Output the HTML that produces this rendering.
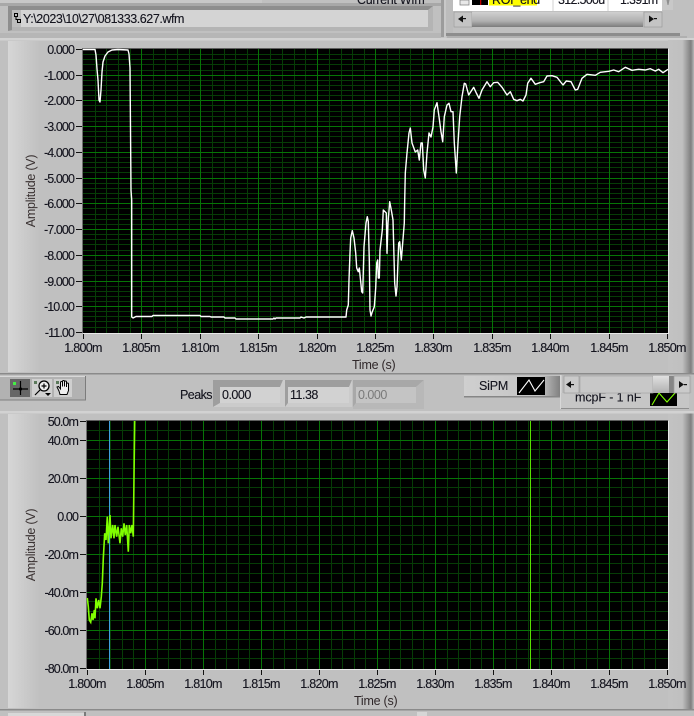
<!DOCTYPE html>
<html><head><meta charset="utf-8"><style>
html,body{margin:0;padding:0;background:#c0c0c0;width:694px;height:716px;overflow:hidden}
svg{display:block}
text{font-family:"Liberation Sans",sans-serif;font-size:12.5px;fill:#14141e;stroke:#14141e;stroke-width:.12px;letter-spacing:-.7px}
.r text{text-anchor:end;letter-spacing:-.9px}
.m text{text-anchor:middle}
</style></head><body>
<svg width="694" height="716" viewBox="0 0 694 716" xmlns="http://www.w3.org/2000/svg">
<defs>
<linearGradient id="lp" x1="0" x2="1" y1="0" y2="0"><stop offset="0" stop-color="#d6d6d6"/><stop offset="1" stop-color="#c0c0c0"/></linearGradient>
<linearGradient id="rb" x1="0" x2="1" y1="0" y2="0"><stop offset="0" stop-color="#c2c2c2"/><stop offset=".55" stop-color="#c0c0c0"/><stop offset=".88" stop-color="#7f7f7f"/><stop offset="1" stop-color="#b8b8b8"/></linearGradient>
<linearGradient id="sb" x1="0" x2="0" y1="0" y2="1"><stop offset="0" stop-color="#d0d0d0"/><stop offset=".6" stop-color="#b0b0b0"/><stop offset="1" stop-color="#7c7c7c"/></linearGradient>
<linearGradient id="bt" x1="0" x2="0" y1="0" y2="1"><stop offset="0" stop-color="#e0e0e0"/><stop offset="1" stop-color="#b0b0b0"/></linearGradient>
<linearGradient id="sip" x1="0" x2="1" y1="0" y2="0"><stop offset="0" stop-color="#cfcfcf"/><stop offset=".8" stop-color="#c4c4c4"/><stop offset="1" stop-color="#808080"/></linearGradient>
</defs>
<rect width="694" height="716" fill="#c0c0c0"/>

<!-- top strip -->
<rect x="0" y="0" width="262" height="3" fill="#c8c8c8"/>
<rect x="0" y="3" width="441" height="3" fill="#a8a8a8"/>
<rect x="8" y="6" width="425" height="25" fill="#b4b4b4"/>
<path d="M8 6H433L428 10H12V30L8 31Z" fill="#8e8e8e"/>
<rect x="12" y="10" width="416" height="17" fill="#d4d4d4"/>
<rect x="12" y="10" width="9" height="17" fill="#bdbdbd"/>
<path d="M14.5 13.5h3v3h-3zM17.5 19.5h3v3h-3zM16 16.5V19.5h3" fill="none" stroke="#000" stroke-width="1"/>
<text x="23" y="23" style="font-size:12.5px;letter-spacing:-.43px">Y:\2023\10\27\081333.627.wfm</text>
<text x="357" y="4" style="letter-spacing:-.3px">Current Wfm</text>
<rect x="0" y="33" width="441" height="5" fill="#b6b6b6"/>
<rect x="441" y="0" width="3" height="37" fill="#9c9c9c"/>
<rect x="444" y="0" width="2" height="38" fill="#c8c8c8"/>
<rect x="446" y="0" width="7" height="34" fill="#bcbcbc"/>
<rect x="446" y="33" width="234" height="3" fill="#8d8d8d"/>
<rect x="447" y="36" width="240" height="2" fill="#b0b0b0"/>
<!-- table -->
<rect x="453" y="0" width="209" height="11" fill="#fff"/>
<rect x="460" y="0" width="9" height="5" fill="#e8e8e8" stroke="#777" stroke-width=".7"/>
<rect x="472" y="0" width="16" height="5" fill="#000"/>
<rect x="480" y="0" width="1.3" height="5" fill="#c00000"/>
<rect x="489" y="0" width="48" height="5.5" fill="#ffff00"/>
<text x="492" y="4" style="letter-spacing:-.3px">ROI_end</text>
<text x="558" y="4">312.500u</text>
<text x="620" y="4">1.391m</text>
<rect x="552.5" y="0" width="1" height="11" fill="#d0d0d0"/>
<rect x="607.5" y="0" width="1" height="11" fill="#d0d0d0"/>
<rect x="662" y="0" width="11" height="10" fill="#c8c8c8"/>
<path d="M666.5 0h3l-1 5h-1z" fill="#909090"/>
<rect x="454" y="12" width="18" height="15" fill="#c4c4c4" stroke="#9c9c9c" stroke-width=".7"/>
<path d="M463 15.5v7l-5-3.5z" fill="#111"/><rect x="463" y="18" width="3" height="1.2" fill="#111"/>
<rect x="472" y="12" width="171" height="15" fill="url(#sb)"/>
<rect x="644" y="12" width="18" height="15" fill="#c4c4c4" stroke="#9c9c9c" stroke-width=".7"/>
<path d="M649 15.5v7l5 -3.5z" fill="#111"/><rect x="654" y="18" width="3" height="1.2" fill="#111"/>

<rect x="0" y="38" width="694" height="2.5" fill="#d2d2d2"/>
<rect x="8" y="41" width="32" height="331" fill="url(#lp)"/>
<rect x="0" y="41" width="8" height="331" fill="#c0c0c0"/>
<rect x="8" y="414" width="32" height="294" fill="url(#lp)"/>
<rect x="668" y="40" width="26" height="333" fill="url(#rb)"/>
<rect x="668" y="413" width="26" height="296" fill="url(#rb)"/>

<!-- TOP PLOT -->
<rect x="83" y="49" width="585" height="284" fill="#000"/>
<rect x="83" y="48" width="585" height="1" fill="#5e5e5e"/>
<rect x="82" y="48" width="1" height="285" fill="#6e6e6e"/>
<g shape-rendering="crispEdges" fill="none" stroke-width="1">
<path stroke="#063c06" d="M95.5 49V333M106.5 49V333M118.5 49V333M130.5 49V333M153.5 49V333M165.5 49V333M177.5 49V333M189.5 49V333M212.5 49V333M224.5 49V333M235.5 49V333M247.5 49V333M270.5 49V333M282.5 49V333M294.5 49V333M305.5 49V333M329.5 49V333M341.5 49V333M352.5 49V333M364.5 49V333M387.5 49V333M399.5 49V333M410.5 49V333M422.5 49V333M445.5 49V333M457.5 49V333M469.5 49V333M480.5 49V333M504.5 49V333M515.5 49V333M527.5 49V333M539.5 49V333M562.5 49V333M574.5 49V333M585.5 49V333M597.5 49V333M621.5 49V333M632.5 49V333M644.5 49V333M656.5 49V333
M83 54.5H668M83 59.5H668M83 64.5H668M83 70.5H668M83 80.5H668M83 85.5H668M83 90.5H668M83 95.5H668M83 105.5H668M83 111.5H668M83 116.5H668M83 121.5H668M83 131.5H668M83 136.5H668M83 142.5H668M83 147.5H668M83 157.5H668M83 162.5H668M83 167.5H668M83 172.5H668M83 183.5H668M83 188.5H668M83 193.5H668M83 198.5H668M83 208.5H668M83 214.5H668M83 219.5H668M83 224.5H668M83 234.5H668M83 239.5H668M83 244.5H668M83 250.5H668M83 260.5H668M83 265.5H668M83 270.5H668M83 275.5H668M83 286.5H668M83 291.5H668M83 296.5H668M83 301.5H668M83 311.5H668M83 316.5H668M83 321.5H668M83 327.5H668"/>
<path stroke="#067406" d="M141.5 49V333M200.5 49V333M258.5 49V333M317.5 49V333M375.5 49V333M433.5 49V333M492.5 49V333M550.5 49V333M609.5 49V333
M83 75.5H668M83 100.5H668M83 126.5H668M83 152.5H668M83 178.5H668M83 203.5H668M83 229.5H668M83 255.5H668M83 281.5H668M83 306.5H668"/>
</g>
<polyline fill="none" stroke="#fff" stroke-width="1.4" stroke-linejoin="round" points="83,49.5 95,49.5 96,55 97,69 98,80 99,100 100,102 101,90 102,72 103,62 105,56 108,52 112,50 118,49.5 128,50 129,54 130,68 131,190 131.7,200 131.7,317 133,318 136,316.5 152,316.5 153,315.5 200,315.5 201,316.5 210,316.5 211,317 224,317 225,318 235,318 236,319 273,319 274,318 275,319 276,318 300,318 301,317 304,318 306,317 346,317 346.7,310 348.3,305 349,280 350,253 350.7,238 352.3,230.7 354,238 355.7,253 356.7,268 358.3,271.7 359.3,268 360.7,281.7 361.7,291.7 362.7,293 364,246.7 366,223 367.3,216.7 368.3,221.7 369.3,260 370,310 371,316 372.3,311.7 374.3,306.7 375.7,288 376.7,263 377.7,260 378.3,278 379.3,278 380,250 382.3,230 383.3,210 386.3,213 387,253.3 388,223 389.7,201.7 391.3,210 393,220 394.7,283 396,296 397,287 398.7,243 399.7,241.7 401.3,260 402.7,243 404.3,223 404.7,200 405.3,173 407,153 409,133 410.3,128 412,143 415.3,152 417.7,150 419.3,160 421,143 422.3,143 423.7,170 425.3,178 427,153 429,133 431,137 433,127 434.3,110 437,102.7 439,116.7 441,131.7 442.7,141.7 444.3,116.7 447,105 449,103.3 451,111.7 453,111.7 454.3,143 456.3,173 458,143 459.7,116.7 462,96.7 464.3,83.3 465.7,84 468.7,95 473.7,87.3 476.3,93 479,98.3 482,90 487,81.7 490.3,86.7 493.7,82.7 497.7,82.3 502,87.3 507,95 510.3,91.7 513.7,99.3 517,100.7 520.3,99.3 523,101 526,95 527.7,83.3 531,78.3 535.3,84.3 539.7,82.7 543.7,81.7 547,76 552,75.7 557,77.3 563,85 566.3,81 571,81.7 575.3,90 577.7,89.3 582,78.3 587,74.3 595.3,75.3 600.3,72.3 608.7,71.3 613.7,70 618.7,71.7 625.3,67.3 632,70.3 638.7,69.3 645.3,70 650.3,68.7 655.3,71 658.7,69.3 663,72.7 668,69.3"/>
<rect x="83" y="333" width="585" height="1" fill="#e8e8e8"/>
<rect x="668" y="49" width="1" height="285" fill="#e8e8e8"/>
<g shape-rendering="crispEdges" fill="none" stroke="#111" stroke-width="1">
<path d="M76 49.5h6M76 75.5h6M76 100.5h6M76 126.5h6M76 152.5h6M76 178.5h6M76 203.5h6M76 229.5h6M76 255.5h6M76 281.5h6M76 306.5h6M76 332.5h6"/>
<path d="M83.5 334v5M141.5 334v5M200.5 334v5M258.5 334v5M317.5 334v5M375.5 334v5M433.5 334v5M492.5 334v5M550.5 334v5M609.5 334v5M667.5 334v5"/>
</g>
<g class="r">
<text x="74" y="54">0.000</text>
<text x="74" y="80">-1.000</text>
<text x="74" y="105">-2.000</text>
<text x="74" y="131">-3.000</text>
<text x="74" y="157">-4.000</text>
<text x="74" y="183">-5.000</text>
<text x="74" y="208">-6.000</text>
<text x="74" y="234">-7.000</text>
<text x="74" y="260">-8.000</text>
<text x="74" y="286">-9.000</text>
<text x="74" y="311">-10.00</text>
<text x="74" y="337">-11.00</text>
</g>
<g class="m">
<text x="83" y="352">1.800m</text><text x="141" y="352">1.805m</text><text x="200" y="352">1.810m</text><text x="258" y="352">1.815m</text><text x="317" y="352">1.820m</text><text x="375" y="352">1.825m</text><text x="433" y="352">1.830m</text><text x="492" y="352">1.835m</text><text x="550" y="352">1.840m</text><text x="609" y="352">1.845m</text><text x="667" y="352">1.850m</text>
</g>
<text x="352" y="369" style="fill:#30282a;stroke:none;letter-spacing:-.25px">Time (s)</text>
<text transform="translate(35,191) rotate(-90)" style="fill:#3a3232;stroke:none;letter-spacing:-.25px;text-anchor:middle">Amplitude (V)</text>

<!-- MIDDLE -->
<rect x="0" y="373" width="694" height="1.5" fill="#8a8a8a"/>
<path d="M0 377H85V400H0Z" fill="#b2b2b2"/>
<rect x="0" y="376" width="85" height="1" fill="#d8d8d8"/>
<rect x="85" y="376" width="1" height="24" fill="#7c7c7c"/>
<rect x="0" y="399.5" width="86" height="1" fill="#808080"/>
<rect x="10" y="379" width="20" height="18" fill="#666"/>
<rect x="32" y="379" width="20" height="18" fill="#d0d0d0"/>
<rect x="54" y="379" width="18" height="18" fill="#cfcfcf"/>
<rect x="13" y="382" width="3" height="3" fill="#44ee44"/>
<path d="M13 389h15M20.5 381v14" stroke="#000" stroke-width="1.2"/><circle cx="20.5" cy="389" r="1.6" fill="#000"/>
<rect x="34" y="381" width="3" height="3" fill="#5c7a5c"/>
<circle cx="44" cy="386" r="5" fill="#eee" stroke="#000" stroke-width="1.3"/>
<path d="M41.5 386h5M44 383.5v5M40 390l-5 5" stroke="#000" stroke-width="1.2"/>
<path d="M45 393h6l-3 3z" fill="#000"/>
<rect x="56" y="381" width="3" height="3" fill="#5c7a5c"/>
<path d="M59 391l-2-4 1.500-.5 2 2.500v-6.500a1 1 0 0 1 2 0v4v-5a1 1 0 0 1 2 0v5v-4.500a1 1 0 0 1 2 0v5v-3a1 1 0 0 1 2 0v6.500l-1.500 4h-7z" fill="#eee" stroke="#000" stroke-width="1"/>

<text x="180" y="399" style="letter-spacing:-.55px">Peaks</text>
<path d="M213 380H283L280 387H220V403L213 407Z" fill="#9e9e9e"/>
<path d="M213 407L220 403H280V387L283 380H285V407Z" fill="#cbcbcb"/>
<rect x="220" y="387" width="60" height="16" fill="#d2d2d2"/>
<text x="222" y="399" style="letter-spacing:-.5px">0.000</text>
<path d="M285 380H352L349 387H288V403L285 407Z" fill="#9e9e9e"/>
<path d="M285 407L288 403H349V387L352 380V407Z" fill="#cbcbcb"/>
<rect x="288" y="387" width="61" height="16" fill="#d2d2d2"/>
<text x="290" y="399" style="letter-spacing:-.5px">11.38</text>
<path d="M353 380H424L416 387H356V403L353 407Z" fill="#a8a8a8"/>
<path d="M353 407L356 403H416V387L424 380V409H353Z" fill="#b8b8b8"/>
<rect x="356" y="387" width="60" height="16" fill="#c4c4c4"/>
<text x="358" y="399" style="fill:#7a7a7a;stroke:none;letter-spacing:-.5px">0.000</text>

<rect x="464" y="376" width="96" height="21" fill="url(#sip)"/>
<rect x="464" y="396" width="96" height="1.500" fill="#868686"/>
<text x="479" y="390" style="letter-spacing:-.2px">SiPM</text>
<rect x="517" y="377" width="28" height="18" fill="#000"/>
<polyline points="519,393 529,380 535,391 544,380" fill="none" stroke="#fff" stroke-width="1.1"/>
<rect x="560" y="375" width="1.500" height="34" fill="#d8d8d8"/>
<rect x="561" y="393" width="128" height="15" fill="#c6c6c6"/>
<rect x="561" y="408" width="128" height="1" fill="#8e8e8e"/>
<text x="575" y="401.5" style="letter-spacing:-.1px">mcpF - 1 nF</text>
<rect x="650" y="392" width="27" height="14" fill="#000"/>
<polyline points="652,405 659,393 667,402 675,393" fill="none" stroke="#80ff00" stroke-width="1.1"/>
<rect x="562" y="375" width="130" height="18" fill="#bcbcbc"/>
<rect x="564" y="376" width="15" height="17" fill="#cacaca" stroke="#9c9c9c" stroke-width=".7"/>
<path d="M571 381v7l-5-3.500z" fill="#111"/><rect x="571" y="384" width="3" height="1.200" fill="#111"/>
<rect x="580" y="376" width="73" height="17" fill="#c8c8c8" stroke="#a4a4a4" stroke-width=".7"/>
<rect x="653" y="376" width="16" height="17" fill="url(#bt)"/>
<rect x="669" y="376" width="5" height="17" fill="#868686"/>
<rect x="674" y="376" width="16" height="17" fill="#cacaca" stroke="#9c9c9c" stroke-width=".7"/>
<path d="M679 381v7l5-3.500z" fill="#111"/><rect x="684" y="384" width="3" height="1.200" fill="#111"/>

<rect x="0" y="411" width="694" height="2.500" fill="#d2d2d2"/>

<!-- BOTTOM PLOT -->
<rect x="87" y="421" width="581" height="248" fill="#000"/>
<rect x="87" y="420" width="581" height="1" fill="#5e5e5e"/>
<rect x="86" y="420" width="1" height="249" fill="#6e6e6e"/>
<g shape-rendering="crispEdges" fill="none" stroke-width="1">
<path stroke="#063c06" d="M99.500 421V669M110.500 421V669M122.500 421V669M133.500 421V669M157.500 421V669M168.500 421V669M180.500 421V669M191.500 421V669M215.500 421V669M226.500 421V669M238.500 421V669M249.500 421V669M273.500 421V669M284.500 421V669M296.500 421V669M307.500 421V669M331.500 421V669M342.500 421V669M354.500 421V669M365.500 421V669M389.500 421V669M400.500 421V669M412.500 421V669M423.500 421V669M447.500 421V669M458.500 421V669M470.500 421V669M481.500 421V669M505.500 421V669M516.500 421V669M528.500 421V669M539.500 421V669M563.500 421V669M574.500 421V669M586.500 421V669M597.500 421V669M621.500 421V669M632.500 421V669M644.500 421V669M655.500 421V669
M87 430.500H668M87 449.500H668M87 459.500H668M87 468.500H668M87 487.500H668M87 497.500H668M87 506.500H668M87 525.500H668M87 535.500H668M87 544.500H668M87 563.500H668M87 573.500H668M87 582.500H668M87 601.500H668M87 611.500H668M87 620.500H668M87 639.500H668M87 649.500H668M87 658.500H668"/>
<path stroke="#067406" d="M145.500 421V669M203.500 421V669M261.500 421V669M319.500 421V669M377.500 421V669M435.500 421V669M493.500 421V669M551.500 421V669M609.500 421V669
M87 440.500H668M87 478.500H668M87 516.500H668M87 554.500H668M87 592.500H668M87 630.500H668"/>
<path stroke="#3f9fe0" d="M109.500 421V669"/>
<path stroke="#58e000" d="M530.500 421V669"/>
</g>
<polyline fill="none" stroke="#80ff00" stroke-width="1.6" points="87.300,598 88.300,606.700 89.300,620 90.700,622.300 92,613.300 93,620 94.300,610 95,618.300 96,598.300 97.300,608.300 98.700,600 100,608.300 101.300,596.700 102.300,583.300 103.300,558.300 104.700,533.300 106,540 107.300,516.700 108.300,543.300 110,515 111,538.300 112.700,525 114,538.300 115,525 116.700,536.700 118,526.700 120,543.300 121.300,528.300 122.700,536.700 124,523.300 125.300,535 126.700,525 128.300,551.700 129.300,525 130.700,533.300 132,525 133.300,536.700 133.700,501.700 134.700,421"/>
<rect x="87" y="669" width="581" height="1" fill="#e8e8e8"/>
<rect x="668" y="421" width="1" height="249" fill="#e8e8e8"/>
<g shape-rendering="crispEdges" fill="none" stroke="#111" stroke-width="1">
<path d="M80 421.500h6M80 440.500h6M80 478.500h6M80 516.500h6M80 554.500h6M80 592.500h6M80 630.500h6M80 668.500h6"/>
<path d="M87.500 670v5M145.500 670v5M203.500 670v5M261.500 670v5M319.500 670v5M377.500 670v5M435.500 670v5M493.500 670v5M551.500 670v5M609.500 670v5M667.500 670v5"/>
</g>
<g class="r">
<text x="78" y="426">50.0m</text>
<text x="78" y="445">40.0m</text>
<text x="78" y="483">20.0m</text>
<text x="78" y="521">0.00</text>
<text x="78" y="559">-20.0m</text>
<text x="78" y="597">-40.0m</text>
<text x="78" y="635">-60.0m</text>
<text x="78" y="673">-80.0m</text>
</g>
<g class="m">
<text x="87" y="688">1.800m</text><text x="145" y="688">1.805m</text><text x="203" y="688">1.810m</text><text x="261" y="688">1.815m</text><text x="319" y="688">1.820m</text><text x="377" y="688">1.825m</text><text x="435" y="688">1.830m</text><text x="493" y="688">1.835m</text><text x="551" y="688">1.840m</text><text x="609" y="688">1.845m</text><text x="667" y="688">1.850m</text>
</g>
<text x="354" y="705" style="fill:#30282a;stroke:none;letter-spacing:-.25px">Time (s)</text>
<text transform="translate(35,545) rotate(-90)" style="fill:#3a3232;stroke:none;letter-spacing:-.25px;text-anchor:middle">Amplitude (V)</text>

<!-- bottom edge -->
<rect x="0" y="709" width="694" height="1.500" fill="#8a8a8a"/>
<rect x="8" y="713" width="76" height="3" fill="#d8d8d8"/>
<rect x="84.500" y="712" width="1" height="4" fill="#333"/>
<rect x="417" y="712" width="10" height="4" fill="#d6d6d6"/>
</svg>
</body></html>
